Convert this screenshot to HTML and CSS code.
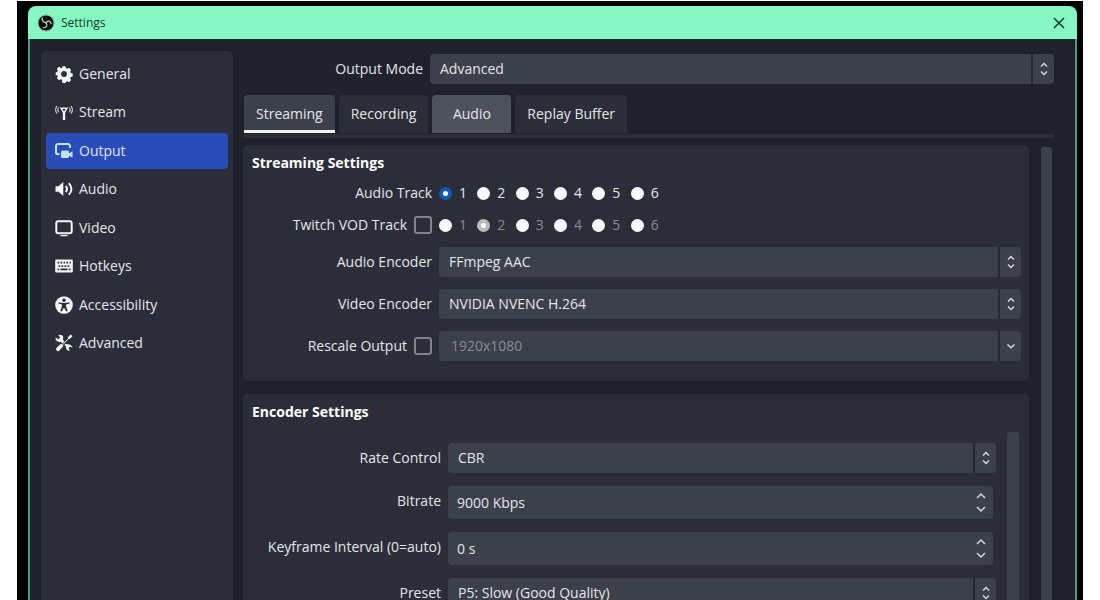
FILE: index.html
```html
<!DOCTYPE html>
<html lang="en">
<head>
<meta charset="utf-8">
<title>Settings</title>
<link rel="stylesheet" href="styles.css">
</head>
<body>
<svg class="sprite" aria-hidden="true">
  <symbol id="updown" viewBox="0 0 10 16"><path d="M2 5.500 5 2.500l3 3M2 10.500l3 3 3-3"/></symbol>
  <symbol id="down" viewBox="0 0 10 16"><path d="M1.500 6.500 5 9.800l3.500-3.300"/></symbol>
  <symbol id="spin-up" viewBox="0 0 12 8"><path d="M2 6l4-4 4 4"/></symbol>
  <symbol id="spin-down" viewBox="0 0 12 8"><path d="M2 2l4 4 4-4"/></symbol>
</svg>
<div class="desktop">
  <div class="window">
    <header class="titlebar">
      <svg class="logo" viewBox="0 0 18 18" aria-hidden="true">
        <circle cx="9" cy="9" r="8" fill="#0c0f0e" stroke="#8fb5a3"/>
        <g fill="none" stroke="#c4cfc9" stroke-width="1.300" stroke-linecap="round">
          <path d="M5.300 3.800C4.700 6.600 6.200 8.400 9 8.600"/>
          <path d="M14.200 9.600C13.700 6.900 10.600 6.100 9 8.600"/>
          <path d="M6.600 13.600C9.800 13.400 10.900 11 9 8.600"/>
        </g>
      </svg>
      <h1 class="title">Settings</h1>
      <button class="close" type="button" aria-label="Close">
        <svg viewBox="0 0 12 12"><path d="M1 1l10 10M11 1 1 11"/></svg>
      </button>
    </header>
    <div class="content">
      <nav class="sidebar">
        <ul class="nav-list">
          <li><a class="nav-item" href="#general">
            <svg viewBox="0 0 18 18"><path fill-rule="evenodd" d="M7.500 1.300h3l.5 1.900 1.400.6 1.700-1 2.100 2.100-1 1.700.6 1.400 1.900.5v3l-1.900.5-.6 1.400 1 1.700-2.100 2.100-1.700-1-1.400.6-.5 1.900h-3L7 14.800l-1.400-.6-1.700 1-2.100-2.100 1-1.700-.6-1.400L.7 10.500v-3l1.500-.5.6-1.400-1-1.700 2.100-2.100 1.700 1L7 3.200zM9 6.100a2.900 2.900 0 1 0 0 5.800 2.900 2.900 0 0 0 0-5.800z"/></svg>General</a></li>
          <li><a class="nav-item" href="#stream">
            <svg viewBox="0 0 18 18"><path d="M4.800 4.500h8.400l-3 5V17H7.800V9.500zM7.300 6 9 8.500 10.700 6z" fill-rule="evenodd"/><g class="line"><path d="M3.600 4.300c-.9 1.700-.9 3.300 0 5M14.400 4.300c.9 1.700.9 3.300 0 5M1.800 3c-1.500 2.400-1.500 5.200 0 7.600M16.200 3c1.500 2.400 1.500 5.200 0 7.600"/></g></svg>Stream</a></li>
          <li><a class="nav-item active" href="#output" aria-current="page">
            <svg viewBox="0 0 18 18"><path class="line thick" d="M4.500 12.200H3.200A2.200 2.200 0 0 1 1 10V4.200A2.200 2.200 0 0 1 3.200 2h9.600A2.200 2.200 0 0 1 15 4.200V6"/><rect x="6" y="8.500" width="8" height="7.500" rx="1.500"/><path d="M13 12l4.500-2.700v6.200L13 13.500z"/></svg>Output</a></li>
          <li><a class="nav-item" href="#audio">
            <svg viewBox="0 0 18 18"><path d="M.5 6.200h3L8.300 2v14L3.500 11.800h-3z"/><path class="line thick" d="M10.700 6c1.600 1.800 1.600 4.200 0 6M13.800 3.300c3.500 3.300 3.500 8.100 0 11.400"/></svg>Audio</a></li>
          <li><a class="nav-item" href="#video">
            <svg viewBox="0 0 18 18"><rect class="line thick" x="1.300" y="2.300" width="15.400" height="12" rx="2"/><path d="M5.500 16h7v1.200h-7z"/></svg>Video</a></li>
          <li><a class="nav-item" href="#hotkeys">
            <svg viewBox="0 0 18 18"><path fill-rule="evenodd" d="M1.500 2.500h15a1.300 1.300 0 0 1 1.300 1.300v10.400a1.300 1.300 0 0 1-1.300 1.300h-15A1.300 1.300 0 0 1 .2 14.200V3.800a1.300 1.300 0 0 1 1.300-1.300zM2.500 4.800v1.800h1.700V4.800zm3 0v1.800h1.700V4.800zm3 0v1.800h1.700V4.800zm3 0v1.800h1.700V4.800zm3 0v1.800h1.300V4.800zM3.500 8.200V10h1.700V8.200zm3 0V10h1.700V8.200zm3 0V10h1.700V8.200zm3 0V10h1.700V8.200zM2.500 11.600v1.600h1.700v-1.600zm3 0v1.600h7v-1.600zm8.300 0v1.600h1.700v-1.600z"/></svg>Hotkeys</a></li>
          <li><a class="nav-item" href="#accessibility">
            <svg viewBox="0 0 18 18"><circle cx="9" cy="9" r="8.800"/><g fill="#2b2e38"><circle cx="9" cy="4.200" r="1.700"/><path d="M3.700 6.200 7.500 7h3l3.800-.8.3 1.200-3.500 1.200v2l1.600 4.400-1.400.6L9.300 12h-.6l-2 3.600-1.400-.6 1.600-4.400v-2L3.400 7.400z"/></g></svg>Accessibility</a></li>
          <li><a class="nav-item" href="#advanced">
            <svg viewBox="0 0 18 18"><path d="M3.200.8 6.800 1a4 4 0 0 1 1 4.800l1.700 1.700-2 2-1.800-1.800A4 4 0 0 1 .5 5L.8 3.500l2.400 1.700 1.900-1.600z"/><path d="M10.500 9.800 12 10.300c2.500-.6 4.700.7 5.500 3.200l-2.700-.7-1.200 1.400 1.200 2.600c-2.600.2-4.200-1.800-3.900-4.200l-1.500-1.700z"/><path class="line" d="M7 11.500 14 4"/><path d="M12.600 3.500 15.700.6l1.800 1.700-3.100 3zM6 9.700l2.400 2.400-4 4.400a1.900 1.900 0 0 1-2.800-2.700z"/></svg>Advanced</a></li>
        </ul>
      </nav>
      <main class="main">
        <div class="field">
          <label class="label" for="mode">Output Mode</label>
          <div class="combo"><select id="mode"><option>Advanced</option></select><span class="arrow"><svg><use href="#updown"/></svg></span></div>
        </div>
        <div class="tabs" role="tablist">
          <button class="tab selected" type="button" role="tab" aria-selected="true">Streaming</button>
          <button class="tab" type="button" role="tab">Recording</button>
          <button class="tab hovered" type="button" role="tab">Audio</button>
          <button class="tab" type="button" role="tab">Replay Buffer</button>
        </div>
        <div class="pane">
          <div class="panels">
            <section class="panel">
              <h2 class="heading">Streaming Settings</h2>
              <div class="fields">
                <div class="field" role="radiogroup" aria-labelledby="track-label">
                  <span class="label" id="track-label">Audio Track</span>
                  <div class="radios">
                    <label><input type="radio" name="track" checked>1</label>
                    <label><input type="radio" name="track">2</label>
                    <label><input type="radio" name="track">3</label>
                    <label><input type="radio" name="track">4</label>
                    <label><input type="radio" name="track">5</label>
                    <label><input type="radio" name="track">6</label>
                  </div>
                </div>
                <div class="field">
                  <label class="label">Twitch VOD Track<input type="checkbox"></label>
                  <div class="radios">
                    <label><input type="radio" name="vod" disabled>1</label>
                    <label><input type="radio" name="vod" disabled checked>2</label>
                    <label><input type="radio" name="vod" disabled>3</label>
                    <label><input type="radio" name="vod" disabled>4</label>
                    <label><input type="radio" name="vod" disabled>5</label>
                    <label><input type="radio" name="vod" disabled>6</label>
                  </div>
                </div>
                <div class="field">
                  <label class="label" for="aenc">Audio Encoder</label>
                  <div class="combo"><select id="aenc"><option>FFmpeg AAC</option></select><span class="arrow"><svg><use href="#updown"/></svg></span></div>
                </div>
                <div class="field">
                  <label class="label" for="venc">Video Encoder</label>
                  <div class="combo"><select id="venc"><option>NVIDIA NVENC H.264</option></select><span class="arrow"><svg><use href="#updown"/></svg></span></div>
                </div>
                <div class="field">
                  <label class="label">Rescale Output<input type="checkbox"></label>
                  <div class="combo"><select aria-label="Output size" disabled><option>1920x1080</option></select><span class="arrow"><svg><use href="#down"/></svg></span></div>
                </div>
              </div>
            </section>
            <section class="panel encoder">
              <h2 class="heading">Encoder Settings</h2>
              <div class="scroll">
                <div class="fields">
                  <div class="field">
                    <label class="label" for="rate">Rate Control</label>
                    <div class="combo"><select id="rate"><option>CBR</option></select><span class="arrow"><svg><use href="#updown"/></svg></span></div>
                  </div>
                  <div class="field">
                    <label class="label raised" for="bitrate">Bitrate</label>
                    <div class="spin"><input id="bitrate" type="text" value="9000 Kbps"><div class="steps"><button type="button" aria-label="Increase bitrate"><svg><use href="#spin-up"/></svg></button><button type="button" aria-label="Decrease bitrate"><svg><use href="#spin-down"/></svg></button></div></div>
                  </div>
                  <div class="field">
                    <label class="label raised" for="keyint">Keyframe Interval (0=auto)</label>
                    <div class="spin"><input id="keyint" type="text" value="0 s"><div class="steps"><button type="button" aria-label="Increase interval"><svg><use href="#spin-up"/></svg></button><button type="button" aria-label="Decrease interval"><svg><use href="#spin-down"/></svg></button></div></div>
                  </div>
                  <div class="field">
                    <label class="label" for="preset">Preset</label>
                    <div class="combo"><select id="preset"><option>P5: Slow (Good Quality)</option></select><span class="arrow"><svg><use href="#updown"/></svg></span></div>
                  </div>
                </div>
                <div class="scrollbar"></div>
              </div>
            </section>
          </div>
          <div class="scrollbar outer"></div>
        </div>
      </main>
    </div>
  </div>
</div>
</body>
</html>
```
FILE: styles.css
```css
* { box-sizing: border-box; }

body {
  margin: 0;
  height: 100vh;
  overflow: hidden;
  display: flex;
  background: #fff;
  color: #e4e5e8;
  font: 14px/20px "Open Sans", "Noto Sans", sans-serif;
}

button, input, select { font: inherit; color: inherit; }

.sprite { display: none; }

.desktop {
  flex: 1;
  display: flex;
  margin: 1px 17px 0;
  padding: 5px 6px 0 11px;
  background: #000;
}

.window {
  flex: 1;
  min-width: 0;
  display: flex;
  flex-direction: column;
  border-radius: 8px 8px 0 0;
  overflow: hidden;
}

.titlebar {
  flex: none;
  display: flex;
  align-items: center;
  gap: 6px;
  height: 33px;
  padding: 0 9px;
  background: #86f7c3;
  color: #123c2a;
}

.logo { width: 18px; height: 18px; }

.title {
  flex: 1;
  margin: 0;
  font-size: 12px;
  font-weight: 400;
}

.close {
  display: flex;
  padding: 3px;
  border: 0;
  background: none;
}

.close svg {
  width: 12px;
  height: 12px;
  fill: none;
  stroke: #123c2a;
  stroke-width: 1.5;
}

.content {
  flex: 1;
  min-height: 0;
  display: flex;
  gap: 10px;
  padding: 0 21px 0 11px;
  border: solid #4f967c;
  border-width: 0 2px;
  background: #1f222b;
}

.sidebar {
  flex: none;
  width: 192px;
  margin-top: 12px;
  padding: 5px;
  border-radius: 5px 5px 0 0;
  background: #2b2e38;
}

.nav-list {
  display: flex;
  flex-direction: column;
  justify-content: space-between;
  min-height: 305px;
  margin: 0;
  padding: 0;
  list-style: none;
}

.nav-item {
  display: flex;
  align-items: center;
  gap: 6px;
  height: 36px;
  padding: 0 9px;
  border-radius: 4px;
  color: inherit;
  text-decoration: none;
}

.nav-item.active { background: #284cb8; }

.nav-item svg {
  width: 18px;
  height: 18px;
  fill: #f4f5f7;
  stroke: #f4f5f7;
  stroke-width: 0;
}

.nav-item.active svg { fill: #c4e0fb; stroke: #c4e0fb; }
.nav-item .line { fill: none; stroke-width: 1; }
.nav-item .thick { stroke-width: 2; }

.main {
  flex: 1;
  min-width: 0;
  display: flex;
  flex-direction: column;
  padding-top: 15px;
}

.field {
  display: grid;
  grid-template-columns: 180px 1fr;
  gap: 7px;
  align-items: center;
}

.label {
  display: flex;
  justify-content: flex-end;
  align-items: center;
  gap: 7px;
  white-space: nowrap;
}

.label.raised { padding-bottom: 4px; }

.combo {
  display: grid;
  grid-template-columns: 1fr 23px;
  height: 30px;
}

.combo select {
  grid-area: 1 / 1 / 2 / 3;
  appearance: none;
  min-width: 0;
  padding: 0 10px;
  border: 0;
  border-radius: 4px;
  background: #3c404a;
}

.combo select:disabled { padding-left: 12px; color: #868a92; opacity: 1; }

.arrow {
  grid-area: 1 / 2;
  display: flex;
  align-items: center;
  justify-content: center;
  border-left: 2px solid #262932;
  pointer-events: none;
}

.arrow svg { width: 10px; height: 16px; }

.arrow svg, .steps svg {
  fill: none;
  stroke: #d4d6da;
  stroke-width: 1.5;
}

.tabs {
  display: flex;
  gap: 4px;
  margin: 11px 0 1px 1px;
}

.tab {
  min-width: 79px;
  height: 38px;
  padding: 0 12px;
  border: 0;
  border-radius: 4px 4px 0 0;
  background: #2b2e38;
}

.tab.selected {
  padding-top: 2px;
  border-bottom: 3px solid #f4f5f7;
  background: #3c404a;
}

.tab.hovered { background: #4d515c; }

.pane {
  flex: 1;
  min-height: 0;
  display: flex;
  gap: 12px;
  padding: 7px 2px 0 0;
  border-top: 4px solid #2b2e38;
}

.panels {
  flex: 1;
  min-width: 0;
  display: flex;
  flex-direction: column;
  gap: 13px;
}

.panel {
  flex: none;
  padding: 8px 8px 20px 9px;
  border-radius: 5px;
  background: #2b2e38;
}

.heading {
  margin: 0 0 10px;
  color: #fff;
  font-size: 14px;
  font-weight: 700;
}

.fields { display: grid; gap: 12px; }

.radios { display: flex; width: 230px; }

.radios label {
  flex: 1;
  display: flex;
  align-items: center;
  gap: 7px;
}

.radios label:has(:disabled) { color: #868a92; }

input[type="radio"] {
  appearance: none;
  width: 13px;
  height: 13px;
  margin: 0;
  border-radius: 50%;
  background: #f8f9fa;
}

input[type="radio"]:checked { border: 4px solid #0e5cb0; background: #fff; }
input[type="radio"]:checked:disabled { border-color: #b9b9b9; }

input[type="checkbox"] {
  appearance: none;
  width: 18px;
  height: 18px;
  margin: 0;
  border: 2px solid #7f838c;
  border-radius: 3px;
}

.encoder { padding-right: 10px; }
.encoder .field { grid-template-columns: 189px 1fr; }
.encoder .fields { flex: 1; gap: 13px; padding-top: 11px; }

.scroll { display: flex; gap: 11px; }

.spin {
  display: flex;
  height: 33px;
  margin-right: 3px;
  border-radius: 4px;
  background: #3c404a;
}

.spin input {
  flex: 1;
  min-width: 0;
  padding: 0 9px;
  border: 0;
  background: none;
}

.steps {
  display: flex;
  flex-direction: column;
  justify-content: space-evenly;
  padding-right: 6px;
}

.steps button {
  display: flex;
  padding: 0;
  border: 0;
  background: none;
}

.steps svg { width: 12px; height: 8px; }

.scrollbar {
  flex: none;
  width: 12px;
  border-radius: 3px 3px 0 0;
  background: #3c404a;
}

.scrollbar.outer { width: 11px; margin-top: 2px; }
```
